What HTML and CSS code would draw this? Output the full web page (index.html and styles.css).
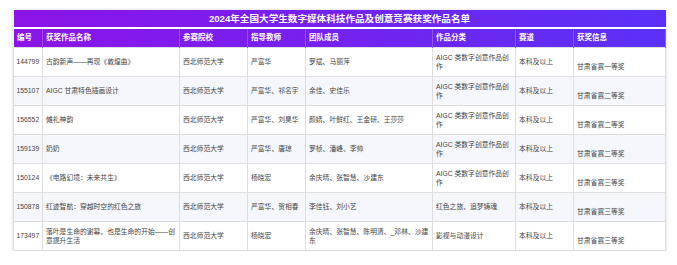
FILE: index.html
```html
<!DOCTYPE html>
<html lang="zh-CN">
<head>
<meta charset="utf-8">
<title>2024年全国大学生数字媒体科技作品及创意竞赛获奖作品名单</title>
<link rel="stylesheet" href="styles.css">
</head>
<body>
<div class="page">
<table class="awards">
  <colgroup>
    <col class="c-id"><col class="c-name"><col class="c-school"><col class="c-teacher">
    <col class="c-team"><col class="c-cat"><col class="c-track"><col class="c-award">
  </colgroup>
  <thead>
    <tr class="title-row"><th colspan="8" class="title">2024年全国大学生数字媒体科技作品及创意竞赛获奖作品名单</th></tr>
    <tr class="head-row">
      <th>编号</th><th>获奖作品名称</th><th>参赛院校</th><th>指导教师</th><th>团队成员</th><th>作品分类</th><th>赛道</th><th>获奖信息</th>
    </tr>
  </thead>
  <tbody>
    <tr>
      <td class="id">144799</td><td>古韵新声——再现《敦煌曲》</td><td>西北师范大学</td><td>严富华</td><td>罗斌、马丽萍</td><td>AIGC 类数字创意作品创作</td><td>本科及以上</td><td class="award">甘肃省赛一等奖</td>
    </tr>
    <tr>
      <td class="id">155107</td><td>AIGC 甘肃特色插画设计</td><td>西北师范大学</td><td>严富华、祁名宇</td><td>余佳、史佳乐</td><td>AIGC 类数字创意作品创作</td><td>本科及以上</td><td class="award">甘肃省赛二等奖</td>
    </tr>
    <tr>
      <td class="id">156552</td><td>傩礼神韵</td><td>西北师范大学</td><td>严富华、刘昊华</td><td>颜婧、叶鲜红、王金研、王莎莎</td><td>AIGC 类数字创意作品创作</td><td>本科及以上</td><td class="award">甘肃省赛二等奖</td>
    </tr>
    <tr>
      <td class="id">159139</td><td>奶奶</td><td>西北师范大学</td><td>严富华、唐琼</td><td>罗桢、潘峰、李帅</td><td>AIGC 类数字创意作品创作</td><td>本科及以上</td><td class="award">甘肃省赛二等奖</td>
    </tr>
    <tr>
      <td class="id">150124</td><td>《电路幻境：未来共生》</td><td>西北师范大学</td><td>杨晓宏</td><td>余庆晴、张智慧、沙建东</td><td>AIGC 类数字创意作品创作</td><td>本科及以上</td><td class="award">甘肃省赛三等奖</td>
    </tr>
    <tr>
      <td class="id">150878</td><td>红迹智航：穿越时空的红色之旅</td><td>西北师范大学</td><td>严富华、贺相春</td><td>李佳钰、刘小艺</td><td>红色之旅、追梦铸魂</td><td>本科及以上</td><td class="award">甘肃省赛三等奖</td>
    </tr>
    <tr>
      <td class="id">173497</td><td>落叶是生命的谢幕，也是生命的开始——创意提升生活</td><td>西北师范大学</td><td>杨晓宏</td><td>余庆晴、张智慧、陈明清、_邓林、沙建东</td><td>影视与动漫设计</td><td>本科及以上</td><td class="award">甘肃省赛三等奖</td>
    </tr>
  </tbody>
</table>
</div>
</body>
</html>
```
FILE: styles.css
```css
html, body {
  margin: 0;
  padding: 0;
  background: #ffffff;
}

body {
  font-family: "Liberation Sans", "Noto Sans CJK SC", sans-serif;
  color: #444;
}

.page {
  padding: 10px 12px 0 13px;
}

.awards {
  width: 652px;
  border-collapse: collapse;
  table-layout: fixed;
  box-shadow: 0 0 3px rgba(0, 0, 0, 0.18);
}

.c-id { width: 29px; }
.c-name { width: 137px; }
.c-school { width: 68px; }
.c-teacher { width: 58px; }
.c-team { width: 127px; }
.c-cat { width: 83px; }
.c-track { width: 58px; }
.c-award { width: 92px; }

.title-row,
.head-row {
  background: linear-gradient(90deg, #8c14e8 0%, #7422ef 50%, #5a31f7 100%);
}

.title {
  color: #fff;
  font-size: 9.6px;
  font-weight: 700;
  line-height: 13px;
  padding: 2px 0;
  text-align: center;
  border-bottom: 2px solid #fff;
}

.head-row th {
  color: #fff;
  font-size: 7.5px;
  font-weight: 700;
  line-height: 10px;
  padding: 4px 3px;
  text-align: left;
  border-left: 1px solid rgba(255, 255, 255, 0.22);
  border-right: 1px solid rgba(255, 255, 255, 0.22);
}

td {
  font-size: 6.8px;
  line-height: 9.5px;
  padding: 4.5px 3px;
  vertical-align: middle;
  border: 1px solid #dedede;
}

td.id {
  white-space: nowrap;
  padding-left: 2.5px;
  padding-right: 1px;
}

tbody tr:nth-child(even) td {
  background: #f5f7fd;
}

td.award {
  padding-top: 14px;
}
```
